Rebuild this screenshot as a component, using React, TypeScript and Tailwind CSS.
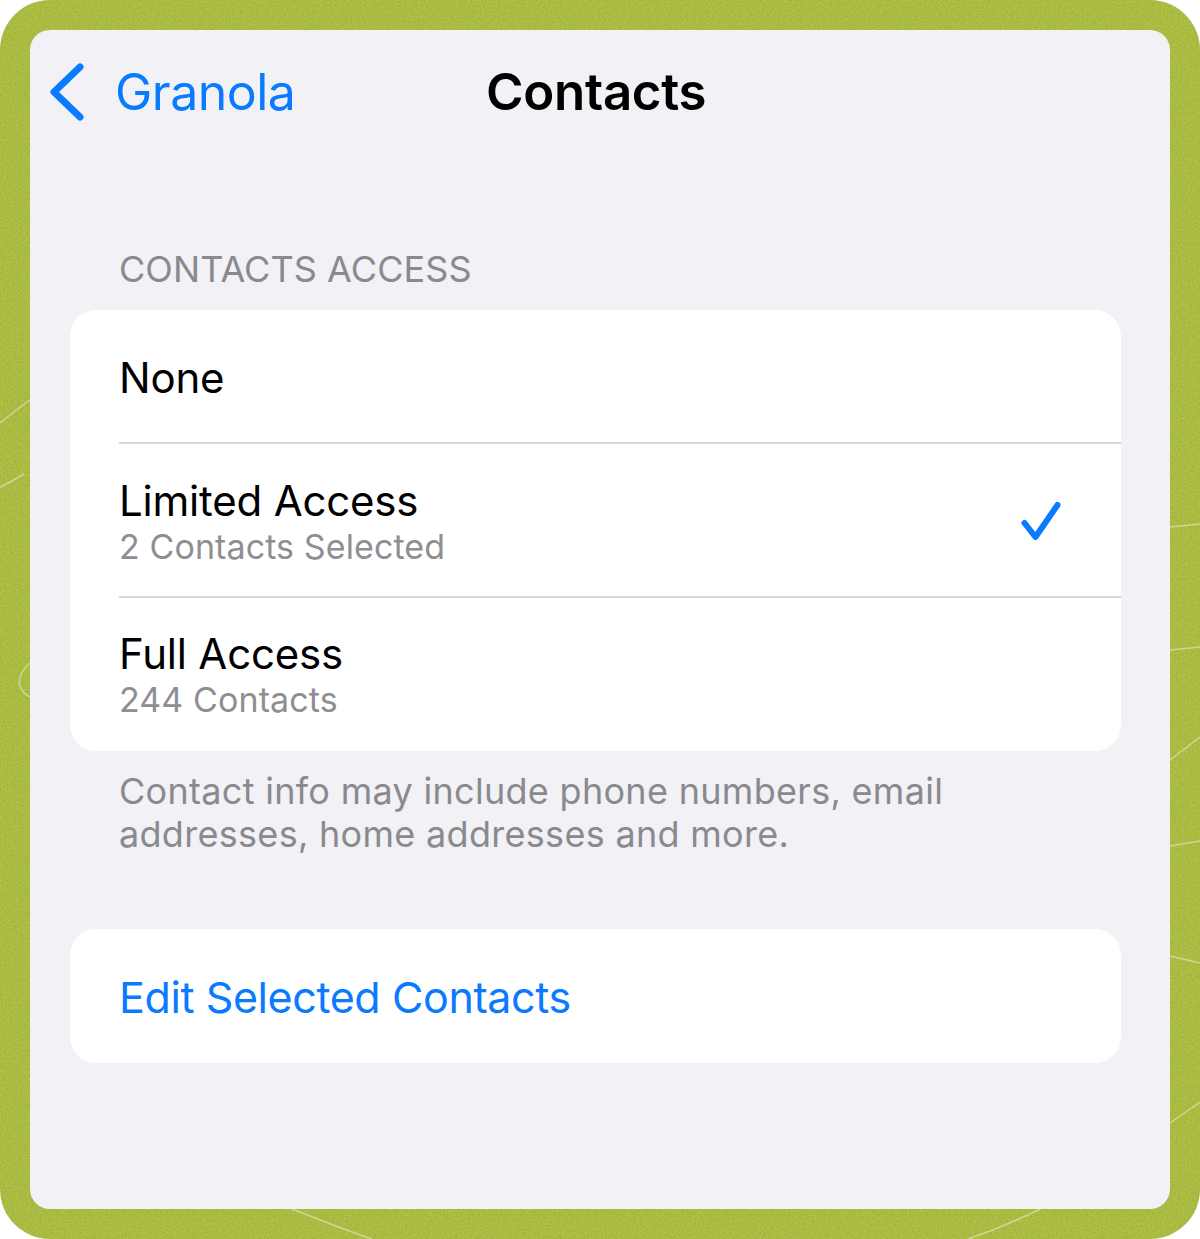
const font = { fontFamily: "Inter, 'Liberation Sans', sans-serif" };

function BackgroundLines() {
    return (
        <svg className="absolute inset-0" width="1200" height="1239" fill="none">
            {/* fine grain on the wallpaper */}
            <filter id="grain" colorInterpolationFilters="sRGB">
                <feTurbulence type="fractalNoise" baseFrequency="0.55" numOctaves="2" seed="4" />
                <feColorMatrix values="0 0 0 0 0.55  0 0 0 0 0.63  0 0 0 0 0.15  1.6 0 0 0 -0.55" />
            </filter>
            <rect width="1200" height="1239" fill="#000" filter="url(#grain)" opacity="0.6" />
            <g stroke="#cfd795" strokeWidth="1.5">
                <path d="M0 423C10 415 20 407 30 400" />
                <path d="M0 487C8 483 16 479 24 474" />
                <path d="M30 663C20 672 18 682 20 686C22 692 26 695 30 697" />
                <path d="M1170 527L1200 524" />
                <path d="M1170 650L1200 647" />
                <path d="M1170 760L1200 737" />
                <path d="M1170 846L1200 841" />
                <path d="M1170 956L1200 963" />
                <path d="M1170 1123L1200 1102" />
                <path d="M292 1209C320 1220 345 1230 372 1239" />
                <path d="M968 1239C995 1230 1018 1220 1040 1209" />
            </g>
        </svg>
    );
}

function Row({ title, sub, checked }: { title: string; sub?: string; checked?: boolean }) {
    return (
        <div className="flex items-center justify-between pr-[60px] h-full">
            <div>
                <div className="text-[42px] leading-[46px] text-black tracking-[-0.2px]">{title}</div>
                {sub && <div className="mt-[3px] text-[34px] leading-[40px] text-[#8e8e93] tracking-[0.1px]">{sub}</div>}
            </div>
            {checked && (
                <svg width="40" height="40" viewBox="0 0 40 40" fill="none" className="-mt-[3px]">
                    <path d="M3.5 22L14.5 36L36.5 4" stroke="#0a7aff" strokeWidth="6" strokeLinecap="round" strokeLinejoin="round" />
                </svg>
            )}
        </div>
    );
}

export default function App() {
    return (
        <div className="w-[1200px] h-[1239px] bg-white" style={font}>
            <div className="relative w-full h-full rounded-[50px] bg-[#b0c048] p-[30px] overflow-hidden">
                <BackgroundLines />
                <div className="relative h-full rounded-[20px] bg-[#f1f1f6] overflow-hidden">
                    {/* Nav bar */}
                    <div className="relative h-[124px] flex items-center">
                        <svg className="ml-[20px]" width="34" height="58" viewBox="0 0 34 58" fill="none">
                            <path d="M30 4L4 29L30 54" stroke="#0a7aff" strokeWidth="7" strokeLinecap="round" strokeLinejoin="round" />
                        </svg>
                        <span className="ml-[31px] text-[50px] text-[#0a7aff] tracking-[-0.5px]">Granola</span>
                        <span className="absolute left-[456px] text-[51px] font-semibold text-black tracking-[-0.3px]">Contacts</span>
                    </div>

                    <div className="px-10">
                        <div className="mt-[93px] pl-[49px] text-[36px] leading-[44px] text-[#8a8a8e] tracking-[0.07px]">CONTACTS ACCESS</div>

                        <div className="mt-[19px] w-[1051px] bg-white rounded-[26px] pl-[49px]">
                            <div className="h-[134px] pt-[4px] border-b-2 border-[#d8d8da]">
                                <Row title="None" />
                            </div>
                            <div className="h-[154px] pt-[5px] border-b-2 border-[#d8d8da]">
                                <Row title="Limited Access" sub="2 Contacts Selected" checked />
                            </div>
                            <div className="h-[153px] pt-[1px]">
                                <Row title="Full Access" sub="244 Contacts" />
                            </div>
                        </div>

                        <p className="mt-[19px] pl-[49px] text-[36px] leading-[43px] text-[#8a8a8e] tracking-[0.3px]">
                            Contact info may include phone numbers, email<br />
                            addresses, home addresses and more.
                        </p>

                        <div className="mt-[73px] w-[1051px] h-[134px] pt-[2px] bg-white rounded-[26px] pl-[49px] flex items-center">
                            <span className="text-[43px] text-[#0a7aff] tracking-[-0.4px]">Edit Selected Contacts</span>
                        </div>
                    </div>
                </div>
            </div>
        </div>
    );
}
